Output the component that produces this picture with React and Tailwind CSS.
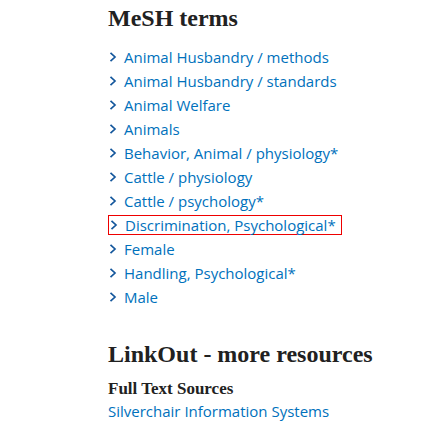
const terms = [
  'Animal Husbandry / methods',
  'Animal Husbandry / standards',
  'Animal Welfare',
  'Animals',
  'Behavior, Animal / physiology*',
  'Cattle / physiology',
  'Cattle / psychology*',
  'Discrimination, Psychological*',
  'Female',
  'Handling, Psychological*',
  'Male',
];

function Chevron() {
  return (
    <svg width="9" height="12" viewBox="0 0 9 12" className="shrink-0">
      <path d="M2.5 1.8 L7 6 L2.5 10.2" fill="none" stroke="#14579c" strokeWidth="1.7" />
    </svg>
  );
}

function Term({ label, marked }) {
  const row = (
    <>
      <Chevron />
      <span className="text-[#0071bc]">{label}</span>
    </>
  );
  return (
    <li className="flex items-center h-[24px] leading-[18px]">
      {marked ? (
        <div className="flex items-center gap-[7px] h-[20px] w-[234px] border border-[#e00]">{row}</div>
      ) : (
        <div className="flex items-center gap-[7px]">{row}</div>
      )}
    </li>
  );
}

export default function App() {
  return (
    <div className="bg-white min-h-[448px] w-[448px] pl-[108px] pt-[3px]">
      <h2 className="font-['Liberation_Serif',serif] font-bold text-[24px] leading-[30px] text-[#212121]">
        MeSH terms
      </h2>
      <ul className="mt-[12px] font-['Open_Sans',sans-serif] text-[15px]">
        {terms.map((t) => (
          <Term key={t} label={t} marked={t === 'Discrimination, Psychological*'} />
        ))}
      </ul>
      <h2 className="mt-[30px] font-['Liberation_Serif',serif] font-bold text-[24px] leading-[30px] text-[#212121]">
        LinkOut - more resources
      </h2>
      <h3 className="mt-[9px] font-['Liberation_Serif',serif] font-bold text-[17px] leading-[22px] text-[#212121]">
        Full Text Sources
      </h3>
      <div className="mt-[1px] font-['Open_Sans',sans-serif] text-[15px] leading-[20px] text-[#0071bc]">
        Silverchair Information Systems
      </div>
    </div>
  );
}
